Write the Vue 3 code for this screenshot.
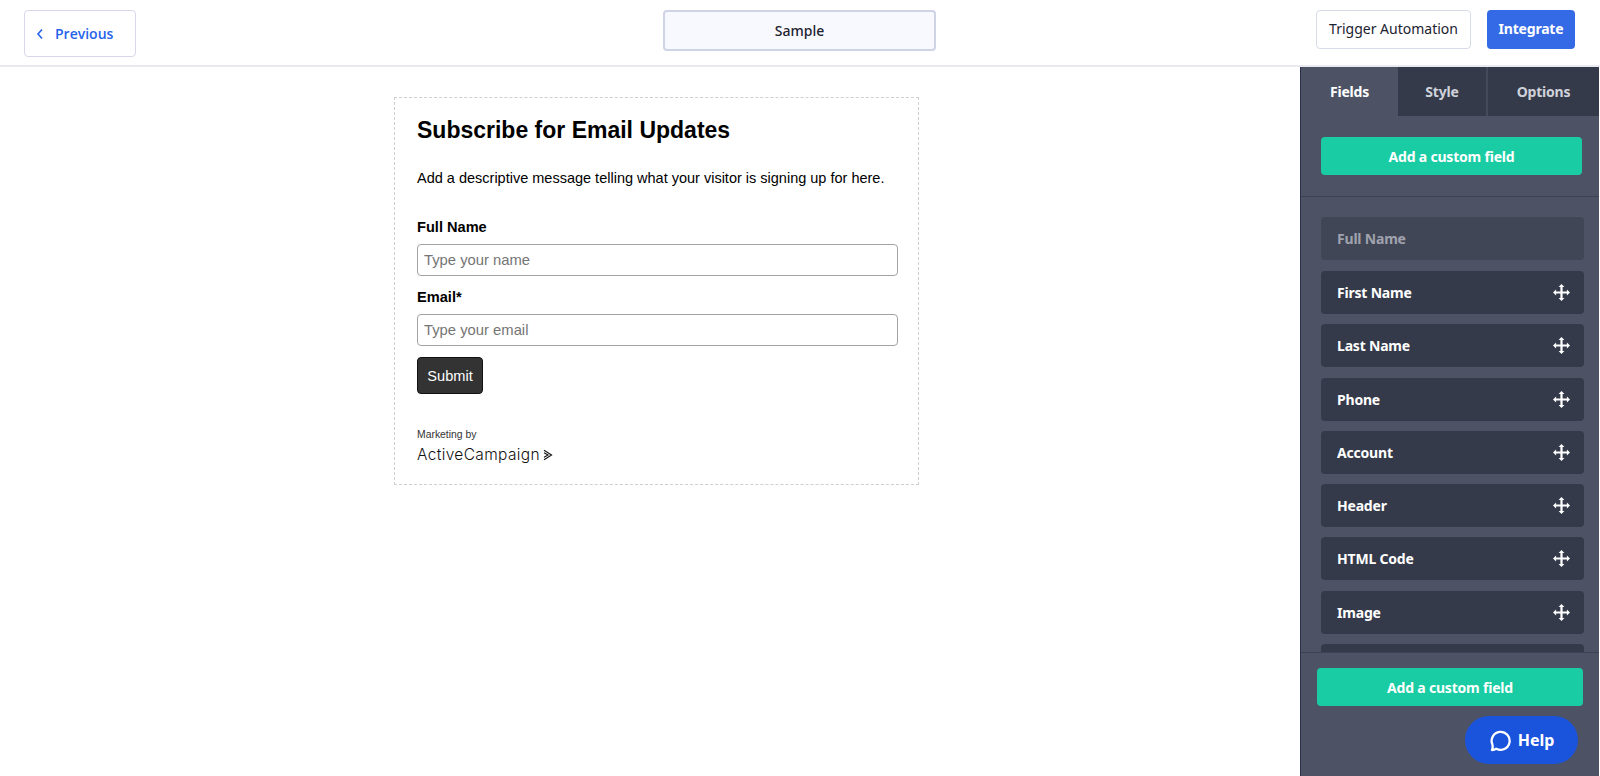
<template>
  <div class="page">
    <header class="topbar">
      <button class="prev-btn">
        <svg width="8" height="12" viewBox="0 0 8 12"><path d="M6 1.500 2 6l4 4.500" fill="none" stroke="#2563eb" stroke-width="1.600" /></svg>
        <span>Previous</span>
      </button>
      <div class="title-box">Sample</div>
      <div class="top-actions">
        <button class="trigger-btn">Trigger Automation</button>
        <button class="integrate-btn">Integrate</button>
      </div>
    </header>

    <div class="body">
      <main class="canvas">
        <form class="form-card" @submit.prevent>
          <h1>Subscribe for Email Updates</h1>
          <p class="intro">Add a descriptive message telling what your visitor is signing up for here.</p>
          <label class="field-label">Full Name</label>
          <input class="field-input" type="text" placeholder="Type your name" />
          <label class="field-label email-label">Email*</label>
          <input class="field-input" type="text" placeholder="Type your email" />
          <button class="submit-btn">Submit</button>
          <div class="marketing">Marketing by</div>
          <div class="logo">
            <span>ActiveCampaign</span>
            <svg width="10" height="12" viewBox="0 0 10 12"><path d="M1 1.200 8.600 6 1 10.800M1 3.800 5 6 1 8.200" fill="none" stroke="#111" stroke-width="1.100" /></svg>
          </div>
        </form>
      </main>

      <aside class="sidebar">
        <div class="tabs">
          <div
            v-for="tab in tabs"
            :key="tab.name"
            class="tab"
            :class="[tab.cls, { active: tab.name === 'Fields' }]"
          >{{ tab.name }}</div>
        </div>
        <div class="add-top">
          <button class="add-btn">Add a custom field</button>
        </div>
        <div class="field-list">
          <div class="field-item disabled">Full Name</div>
          <div v-for="item in fieldItems" :key="item" class="field-item">
            <span>{{ item }}</span>
            <svg width="17" height="17" viewBox="0 0 17 17" fill="#fff">
              <path d="M8.500 0 11.400 3.100H9.600V7.400H13.900V5.600L17 8.500 13.900 11.400V9.600H9.600V13.900H11.400L8.500 17 5.600 13.900H7.400V9.600H3.100V11.400L0 8.500 3.100 5.600V7.400H7.400V3.100H5.600Z" />
            </svg>
          </div>
          <div class="field-item"></div>
        </div>
        <div class="add-bottom">
          <button class="add-btn">Add a custom field</button>
        </div>
        <div class="help-wrap">
          <button class="help-btn">
            <svg width="22" height="23" viewBox="0 0 22 23"><path d="M3 21c1.500 0 3-.3 4.200-1.300A9 9 0 1 0 3.400 15.500c.4 1.800.3 3.800-.4 5.500Z" fill="none" stroke="#fff" stroke-width="2.300" stroke-linejoin="round" /></svg>
            <span>Help</span>
          </button>
        </div>
      </aside>
    </div>
  </div>
</template>

<script setup>
const tabs = [
  { name: 'Fields', cls: 'tab-fields' },
  { name: 'Style', cls: 'tab-style' },
  { name: 'Options', cls: 'tab-options' }
]
const fieldItems = ['First Name', 'Last Name', 'Phone', 'Account', 'Header', 'HTML Code', 'Image']
</script>

<style>
html, body {
  margin: 0;
  height: 100%;
  overflow: hidden;
  background: #fff;
}
</style>

<style scoped>
.page {
  width: 1600px;
  height: 776px;
  display: flex;
  flex-direction: column;
  font-family: "Noto Sans", sans-serif;
  overflow: hidden;
}
button {
  font-family: inherit;
  cursor: pointer;
}
.topbar {
  height: 67px;
  flex-shrink: 0;
  box-sizing: border-box;
  border-bottom: 2px solid #e9e9f2;
  display: flex;
  align-items: flex-start;
  padding: 10px 25px 0 24px;
}
.prev-btn {
  width: 112px;
  height: 47px;
  display: flex;
  align-items: center;
  gap: 11px;
  padding: 0 0 0 11px;
  background: #fff;
  border: 1px solid #d8d8ea;
  border-radius: 4px;
  color: #2563eb;
  font-family: "Open Sans", sans-serif;
  font-size: 14px;
  font-weight: 600;
}
.title-box {
  width: 273px;
  height: 41px;
  box-sizing: border-box;
  margin-left: 527px;
  display: flex;
  align-items: center;
  justify-content: center;
  background: #f8f9ff;
  border: 2px solid #ced3e6;
  border-radius: 4px;
  color: #1c2230;
  font-size: 14px;
  font-weight: 500;
}
.top-actions {
  margin-left: auto;
  display: flex;
  gap: 16px;
}
.trigger-btn {
  width: 155px;
  height: 39px;
  background: #fff;
  border: 1px solid #d7dbea;
  border-radius: 4px;
  color: #1c2230;
  font-size: 14px;
  padding: 0 0 2px;
}
.integrate-btn {
  width: 88px;
  height: 39px;
  background: #356ae6;
  border: none;
  border-radius: 4px;
  color: #fff;
  font-size: 14px;
  font-weight: 700;
  letter-spacing: -0.2px;
  padding: 0 0 2px;
}
.body {
  flex: 1;
  display: flex;
  min-height: 0;
}
.canvas {
  flex: 1;
  padding: 30px 0 0 394px;
}
.form-card {
  width: 525px;
  height: 388px;
  box-sizing: border-box;
  border: 1px dashed #cfcfcf;
  padding: 18px 10px 0 22px;
  font-family: "Liberation Sans", Arial, sans-serif;
  color: #000;
}
h1 {
  margin: 0;
  font-size: 23px;
  line-height: 28px;
  font-weight: 700;
}
.intro {
  margin: 25px 0 0;
  font-size: 14.500px;
  line-height: 18px;
}
.field-label {
  display: block;
  font-size: 14.600px;
  font-weight: 700;
  line-height: 18px;
  margin-top: 31px;
}
.email-label {
  margin-top: 12px;
}
.field-input {
  display: block;
  width: 481px;
  box-sizing: border-box;
  height: 32px;
  margin-top: 8px;
  padding: 0 6px;
  border: 1px solid #a3a3a3;
  border-radius: 4px;
  font-family: inherit;
  font-size: 14.800px;
  outline: none;
}
.field-input::placeholder {
  color: #757575;
}
.submit-btn {
  display: block;
  width: 66px;
  height: 37px;
  margin-top: 11px;
  padding: 0;
  background: #333;
  border: 1px solid #111;
  border-radius: 4px;
  color: #fff;
  font-family: inherit;
  font-size: 14.600px;
}
.marketing {
  margin-top: 35px;
  font-size: 10.400px;
  line-height: 12px;
  color: #333;
}
.logo {
  margin-top: 5px;
  display: flex;
  align-items: center;
  gap: 3px;
  font-family: Inter, sans-serif;
  font-size: 15.500px;
  letter-spacing: 0.35px;
  line-height: 18px;
  font-weight: 300;
  color: #111;
}
.sidebar {
  width: 300px;
  box-sizing: border-box;
  border-left: 1px solid #27314f;
  border-right: 1px solid #fff;
  background: #4d5365;
  position: relative;
  display: flex;
  flex-direction: column;
  min-height: 0;
}
.tabs {
  display: flex;
  height: 49px;
  flex-shrink: 0;
  background: #353a4a;
  font-size: 14px;
  font-weight: 700;
  letter-spacing: -0.2px;
}
.tab {
  display: flex;
  align-items: center;
  justify-content: center;
  color: #cfd2da;
}
.tab.active {
  background: #4d5365;
  color: #fff;
}
.tab-fields { width: 97px; }
.tab-style { width: 88px; border-right: 2px solid #454a5b; }
.tab-options { flex: 1; }
.add-top {
  flex-shrink: 0;
  padding: 21px 17px 21px 20px;
  border-bottom: 1px solid #3d4254;
}
.add-btn {
  display: block;
  width: 100%;
  height: 38px;
  padding: 0;
  background: #19cca3;
  border: none;
  border-radius: 4px;
  color: #fff;
  font-size: 14px;
  font-weight: 700;
  letter-spacing: -0.2px;
}
.field-list {
  flex: 1;
  min-height: 0;
  overflow: hidden;
  padding: 20px 15px 0 20px;
}
.field-item {
  height: 43px;
  margin-bottom: 10.300px;
  box-sizing: border-box;
  padding: 0 14px 0 16px;
  display: flex;
  align-items: center;
  justify-content: space-between;
  background: #353a4a;
  border-radius: 4px;
  color: #fff;
  font-size: 14px;
  font-weight: 700;
  letter-spacing: -0.2px;
}
.field-item.disabled {
  background: #414657;
  color: #a0a3ad;
  margin-bottom: 11px;
}
.add-bottom {
  flex-shrink: 0;
  height: 124px;
  box-sizing: border-box;
  padding: 15px 16px 0 16px;
  border-top: 1px solid #3d4254;
}
.help-wrap {
  position: absolute;
  right: 21px;
  bottom: 12px;
}
.help-btn {
  width: 113px;
  height: 48px;
  display: flex;
  align-items: center;
  justify-content: center;
  gap: 7px;
  padding: 0;
  background: #1a53dc;
  border: none;
  border-radius: 24px;
  color: #fff;
  font-size: 16px;
  font-weight: 700;
}
</style>
